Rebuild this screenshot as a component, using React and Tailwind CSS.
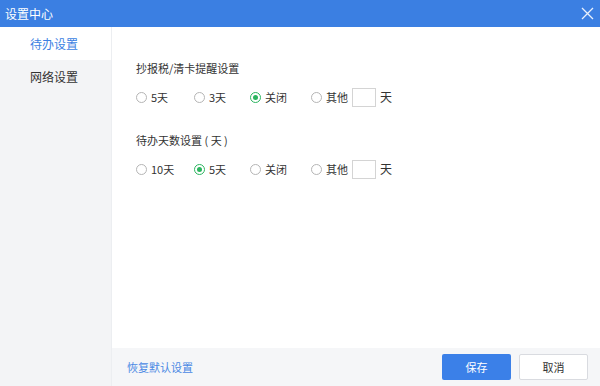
import { useState } from "react";

function Radio({ checked, label, onClick, w }) {
  return (
    <button type="button" onClick={onClick} className={`flex items-center gap-[4px] ${w}`}>
      <span
        className={`w-[11px] h-[11px] rounded-full border flex items-center justify-center bg-white ${
          checked ? "border-[#2bb55f]" : "border-[#b5b5b5]"
        }`}
      >
        {checked && <span className="w-[5px] h-[5px] rounded-full bg-[#2bb55f]" />}
      </span>
      <span className="text-[11px] text-[#333]">{label}</span>
    </button>
  );
}

function Group({ title, options, value, onChange }) {
  const widths = ["w-[58px]", "w-[56px]", "w-[61px]", ""];
  return (
    <div>
      <div className="text-[11px] text-[#333] leading-[20px]">{title}</div>
      <div className="flex items-center mt-[9px] h-[20px]">
        {options.map((o, i) => (
          <Radio key={o} label={o} w={widths[i]} checked={value === i} onClick={() => onChange(i)} />
        ))}
        <input className="ml-[4px] w-[24px] h-[19px] border border-[#d4d4d4] outline-none text-[11px] px-1" />
        <span className="ml-[4px] text-[12px] text-[#333]">天</span>
      </div>
    </div>
  );
}

export default function App() {
  const [tab, setTab] = useState(0);
  const [a, setA] = useState(2);
  const [b, setB] = useState(1);

  return (
    <div
      className="w-[600px] h-[386px] flex flex-col bg-white"
      style={{ fontFamily: '"Noto Sans CJK SC", "Noto Sans", sans-serif' }}
    >
      <div className="h-[27px] bg-[#3b7fe2] flex items-center justify-between pl-[5px] pr-[6px]">
        <span className="text-white text-[12px]">设置中心</span>
        <svg width="13" height="13" viewBox="0 0 13 13" stroke="#e8f0fc" strokeWidth="1.3">
          <path d="M1 1 L12 12 M12 1 L1 12" />
        </svg>
      </div>
      <div className="flex-1 flex">
        <div className="w-[112px] bg-[#f3f4f6] border-r border-[#eceef1]">
          {["待办设置", "网络设置"].map((t, i) => (
            <button
              key={t}
              type="button"
              onClick={() => setTab(i)}
              className={`w-full h-[33px] pl-[30px] text-left text-[12px] ${
                tab === i ? "bg-white text-[#3b7fe2]" : "text-[#333]"
              }`}
            >
              {t}
            </button>
          ))}
        </div>
        <div className="flex-1 flex flex-col">
          <div className="flex-1 pl-[24px] pt-[31px] flex flex-col gap-[23px]">
            <Group title="抄报税/清卡提醒设置" options={["5天", "3天", "关闭", "其他"]} value={a} onChange={setA} />
            <Group title="待办天数设置 ( 天 )" options={["10天", "5天", "关闭", "其他"]} value={b} onChange={setB} />
          </div>
          <div className="h-[38px] bg-[#f5f6f8] flex items-center pl-[15px] pr-[12px]">
            <button type="button" className="text-[11px] text-[#4a88e4]">恢复默认设置</button>
            <div className="ml-auto flex gap-[8px]">
              <button type="button" className="w-[69px] h-[26px] bg-[#3b80e8] text-white text-[11px] rounded-[2px]">
                保存
              </button>
              <button type="button" className="w-[69px] h-[26px] bg-white border border-[#d9dbe0] text-[#333] text-[11px] rounded-[2px]">
                取消
              </button>
            </div>
          </div>
        </div>
      </div>
    </div>
  );
}
